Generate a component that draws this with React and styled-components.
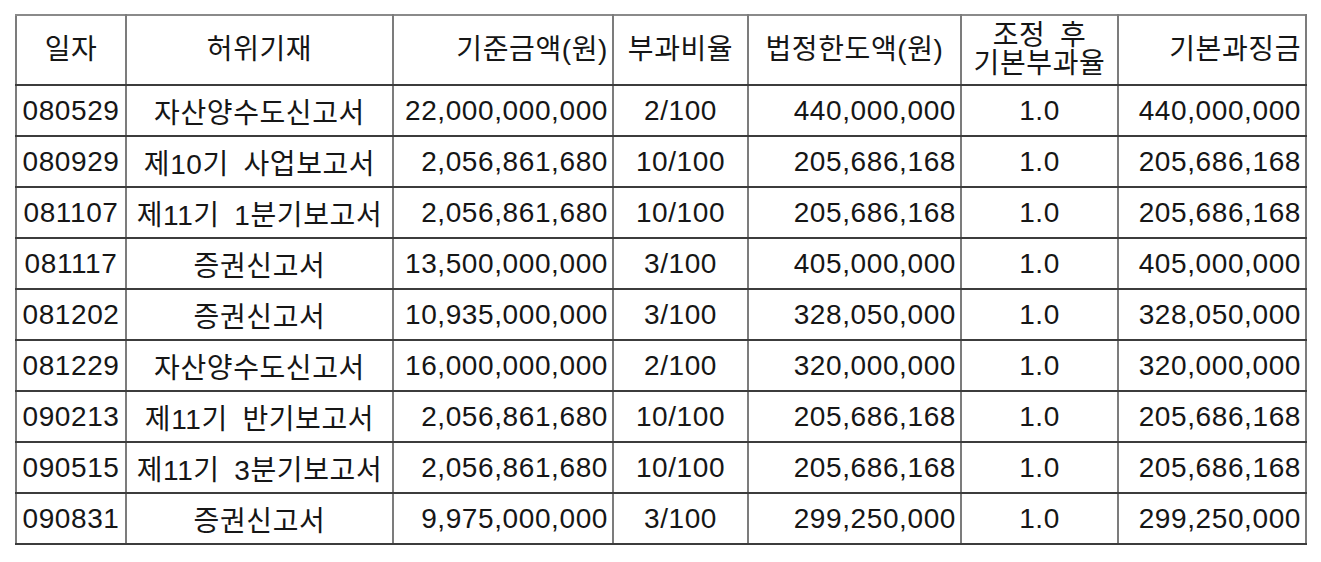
import React from 'react';
import styled, {createGlobalStyle} from "styled-components";

const GlobalStyle = createGlobalStyle`
  html, body {
    margin: 0;
    padding: 0;
    background: #ffffff;
  }
`
const Page = styled.div`
  padding: 14px 0 0 15px;
  font-family: "Liberation Sans", "Noto Sans CJK KR", sans-serif;
  color: #161616;
`
const Table = styled.table`
  border-collapse: collapse;
  table-layout: fixed;
  width: 1290px;
  font-size: 28px;
  letter-spacing: 0.6px;
`
const HeadCell = styled.th`
  height: 68px;
  padding: 0 ${p => p.$align === 'right' ? '4px' : '1px'} 0 1px;
  font-weight: 400;
  text-align: ${p => p.$align || 'center'};
  line-height: 28px;
  white-space: pre;
  border-left: 2px solid #7c7c7c;
  border-right: 2px solid #7c7c7c;
  border-top: 2px solid #8a8a8a;
  border-bottom: 2px solid #3c3c3c;
`
const HeadLine = styled.div`
  height: 28px;
`
const Cell = styled.td`
  height: 49px;
  padding: 0 ${p => p.$align === 'right' ? '4px' : '1px'} 0 1px;
  text-align: ${p => p.$align || 'center'};
  white-space: pre;
  border-left: 2px solid #7c7c7c;
  border-right: 2px solid #7c7c7c;
  border-top: 2px solid #3c3c3c;
  border-bottom: 2px solid #3c3c3c;
`

// half-width gap like the original Korean font's space
const sp = '\u2002'

const columns = [
  {title: '일자', width: 110, align: 'center'},
  {title: '허위기재', width: 267, align: 'center'},
  {title: '기준금액(원)', width: 220, align: 'right'},
  {title: '부과비율', width: 135, align: 'center'},
  {title: '법정한도액(원)', width: 213, align: 'center', cell: 'right'},
  {title: ['조정' + sp + '후', '기본부과율'], width: 157, align: 'center'},
  {title: '기본과징금', width: 188, align: 'right'},
]

const rows = [
  ['080529', '자산양수도신고서', '22,000,000,000', '2/100', '440,000,000', '1.0', '440,000,000'],
  ['080929', '제10기' + sp + '사업보고서', '2,056,861,680', '10/100', '205,686,168', '1.0', '205,686,168'],
  ['081107', '제11기' + sp + '1분기보고서', '2,056,861,680', '10/100', '205,686,168', '1.0', '205,686,168'],
  ['081117', '증권신고서', '13,500,000,000', '3/100', '405,000,000', '1.0', '405,000,000'],
  ['081202', '증권신고서', '10,935,000,000', '3/100', '328,050,000', '1.0', '328,050,000'],
  ['081229', '자산양수도신고서', '16,000,000,000', '2/100', '320,000,000', '1.0', '320,000,000'],
  ['090213', '제11기' + sp + '반기보고서', '2,056,861,680', '10/100', '205,686,168', '1.0', '205,686,168'],
  ['090515', '제11기' + sp + '3분기보고서', '2,056,861,680', '10/100', '205,686,168', '1.0', '205,686,168'],
  ['090831', '증권신고서', '9,975,000,000', '3/100', '299,250,000', '1.0', '299,250,000'],
]

export default function App() {
  return (
    <Page>
      <GlobalStyle />
      <Table>
        <colgroup>
          {columns.map((c, i) => <col key={i} style={{width: c.width}} />)}
        </colgroup>
        <thead>
          <tr>
            {columns.map((c, i) => (
              <HeadCell key={i} $align={c.align}>
                {Array.isArray(c.title)
                  ? c.title.map((line, j) => <HeadLine key={j}>{line}</HeadLine>)
                  : c.title}
              </HeadCell>
            ))}
          </tr>
        </thead>
        <tbody>
          {rows.map((row) => (
            <tr key={row[0]}>
              {row.map((value, i) => (
                <Cell key={i} $align={columns[i].cell || columns[i].align}>{value}</Cell>
              ))}
            </tr>
          ))}
        </tbody>
      </Table>
    </Page>
  );
}
